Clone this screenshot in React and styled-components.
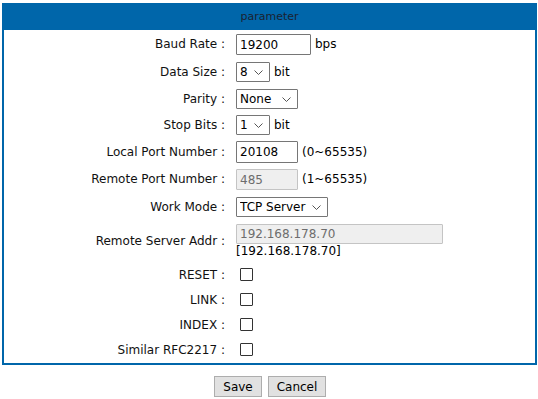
import React from 'react';
import styled, { createGlobalStyle } from 'styled-components';

const GlobalStyle = createGlobalStyle`
  html, body {
    margin: 0;
    padding: 0;
    background: #fff;
  }
  body {
    font-family: 'DejaVu Sans', 'Liberation Sans', sans-serif;
    font-size: 12px;
    color: #000;
  }
`;

const Page = styled.div`
  width: 538px;
  padding: 3px 0 0 2px;
  box-sizing: border-box;
`;

const Panel = styled.div`
  width: 535px;
  border: 2px solid #0066aa;
  border-top: none;
  box-sizing: border-box;
`;

const PanelTitle = styled.div`
  height: 27px;
  margin: 0 -2px;
  background: #0066aa;
  color: #1b2230;
  font-size: 11px;
  display: flex;
  align-items: center;
  justify-content: center;
`;

const Form = styled.div`
  display: flex;
  flex-direction: column;
  padding-bottom: 1px;
`;

const Row = styled.div`
  display: grid;
  grid-template-columns: 221px 1fr;
  column-gap: 11px;
  align-items: center;
  height: ${(p) => p.$h}px;
`;

const Label = styled.div`
  text-align: right;
  white-space: nowrap;
  color: #111;
`;

const Value = styled.div`
  display: flex;
  align-items: center;
  gap: 4px;
  white-space: nowrap;
`;

const Stack = styled.div`
  display: flex;
  flex-direction: column;
  align-items: flex-start;
  line-height: 15px;
`;

const TextInput = styled.input`
  width: ${(p) => p.$w}px;
  height: ${(p) => p.$ht || 21}px;
  box-sizing: border-box;
  margin: 0;
  padding: 1px 3px 0;
  border: 1px solid #767676;
  border-radius: 1px;
  font-family: 'DejaVu Sans', 'Liberation Sans', sans-serif;
  font-size: 12px;
  color: #000;
  background: #fff;
  outline: none;

  &:disabled {
    background: #efefef;
    border-color: #c4c4c4;
    color: #6d6d6d;
  }
`;

const SelectBox = styled.div`
  position: relative;
  display: inline-flex;
  width: ${(p) => p.$w}px;
  height: 20px;
`;

const NativeSelect = styled.select`
  appearance: none;
  -webkit-appearance: none;
  width: 100%;
  height: 100%;
  box-sizing: border-box;
  margin: 0;
  padding: 0 0 0 3px;
  border: 1px solid #767676;
  border-radius: 1px;
  background: #fff;
  font-family: 'DejaVu Sans', 'Liberation Sans', sans-serif;
  font-size: 12px;
  color: #000;
  outline: none;
`;

const Chevron = styled.svg`
  position: absolute;
  right: 7px;
  top: 8px;
  pointer-events: none;
`;

const Check = styled.span`
  display: inline-block;
  width: 13px;
  height: 13px;
  box-sizing: border-box;
  border: 1px solid #333;
  border-radius: 1px;
  background: #fff;
  margin-left: 4px;
`;

const Buttons = styled.div`
  display: flex;
  justify-content: center;
  gap: 6px;
  margin-top: 11px;
`;

const Button = styled.button`
  width: ${(p) => p.$w}px;
  height: 21px;
  margin: 0;
  padding: 0;
  border: 1px solid #adadad;
  background: #e1e1e1;
  font-family: 'DejaVu Sans', 'Liberation Sans', sans-serif;
  font-size: 12px;
  color: #000;
`;

const Select = ({ w, value, options }) => (
  <SelectBox $w={w}>
    <NativeSelect defaultValue={value}>
      {options.map((o) => (
        <option key={o}>{o}</option>
      ))}
    </NativeSelect>
    <Chevron width="9" height="5" viewBox="0 0 9 5">
      <path d="M0.5 0.5 L4.5 4.5 L8.5 0.5" fill="none" stroke="#555" strokeWidth="1" />
    </Chevron>
  </SelectBox>
);

export default function App() {
  return (
    <Page>
      <GlobalStyle />
      <Panel>
        <PanelTitle>parameter</PanelTitle>
        <Form>
          <Row $h={28}>
            <Label>Baud Rate :</Label>
            <Value>
              <TextInput $w={75} defaultValue="19200" />
              <span>bps</span>
            </Value>
          </Row>
          <Row $h={27}>
            <Label>Data Size :</Label>
            <Value>
              <Select w={34} value="8" options={['5', '6', '7', '8']} />
              <span>bit</span>
            </Value>
          </Row>
          <Row $h={27}>
            <Label>Parity :</Label>
            <Value>
              <Select w={62} value="None" options={['None', 'Odd', 'Even']} />
            </Value>
          </Row>
          <Row $h={26}>
            <Label>Stop Bits :</Label>
            <Value>
              <Select w={34} value="1" options={['1', '2']} />
              <span>bit</span>
            </Value>
          </Row>
          <Row $h={27}>
            <Label>Local Port Number :</Label>
            <Value>
              <TextInput $w={62} $ht={22} defaultValue="20108" />
              <span>(0~65535)</span>
            </Value>
          </Row>
          <Row $h={28}>
            <Label>Remote Port Number :</Label>
            <Value>
              <TextInput $w={62} defaultValue="485" disabled />
              <span>(1~65535)</span>
            </Value>
          </Row>
          <Row $h={27}>
            <Label>Work Mode :</Label>
            <Value>
              <Select w={92} value="TCP Server" options={['TCP Server', 'TCP Client', 'UDP']} />
            </Value>
          </Row>
          <Row $h={42}>
            <Label>Remote Server Addr :</Label>
            <Stack>
              <TextInput $w={207} $ht={20} defaultValue="192.168.178.70" disabled />
              <span>[192.168.178.70]</span>
            </Stack>
          </Row>
          <Row $h={25}>
            <Label>RESET :</Label>
            <Value>
              <Check />
            </Value>
          </Row>
          <Row $h={25}>
            <Label>LINK :</Label>
            <Value>
              <Check />
            </Value>
          </Row>
          <Row $h={25}>
            <Label>INDEX :</Label>
            <Value>
              <Check />
            </Value>
          </Row>
          <Row $h={25}>
            <Label>Similar RFC2217 :</Label>
            <Value>
              <Check />
            </Value>
          </Row>
        </Form>
      </Panel>
      <Buttons>
        <Button $w={48}>Save</Button>
        <Button $w={58}>Cancel</Button>
      </Buttons>
    </Page>
  );
}
